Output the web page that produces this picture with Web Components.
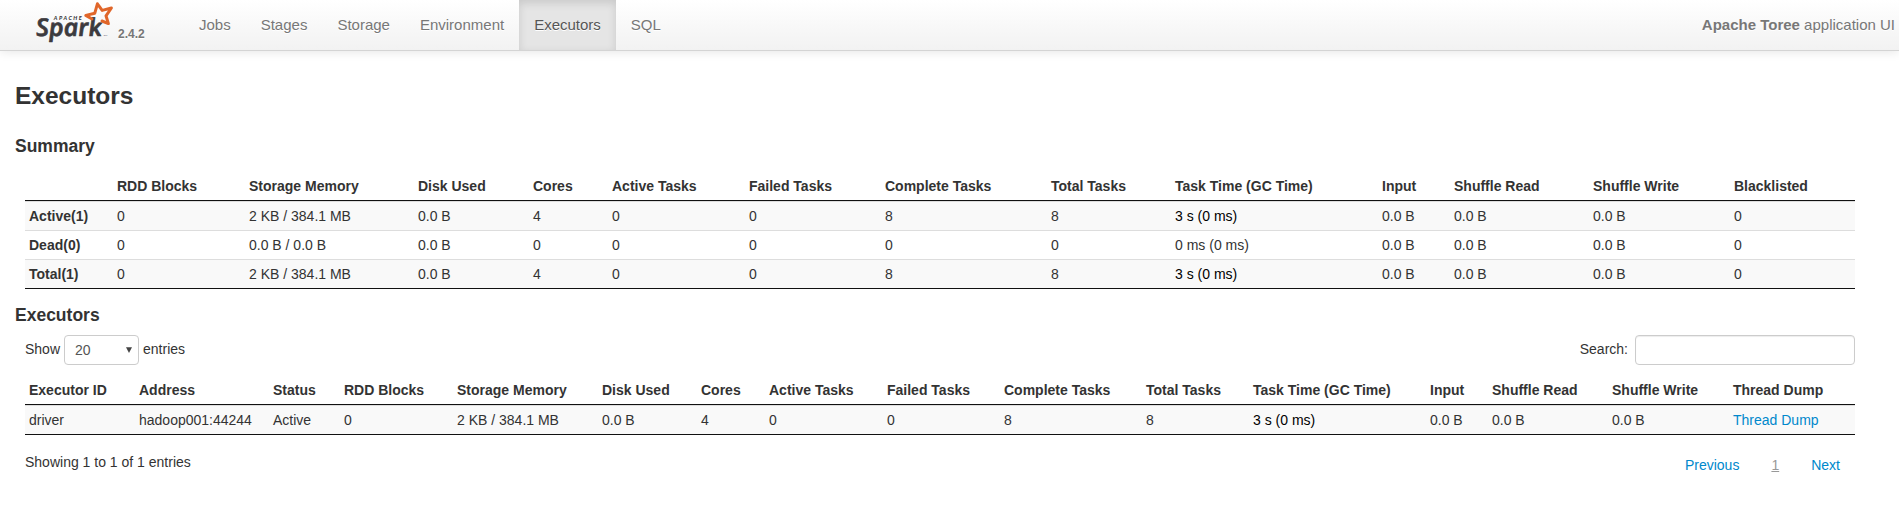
<!DOCTYPE html>
<html lang="en">
<head>
<meta charset="utf-8">
<title>Apache Toree - Executors</title>
<style>
html, body { margin: 0; background: #fff; }
body { font: 14px/20px "Liberation Sans", Arial, sans-serif; color: #333; }
</style>
</head>
<body>
<spark-app></spark-app>
<script>
const define = (name, html, setup) => customElements.define(name, class extends HTMLElement {
  constructor() {
    super();
    this.attachShadow({ mode: "open" }).innerHTML = html;
  }
  connectedCallback() { if (setup) setup(this, this.shadowRoot); }
});

define("spark-logo", `
<style>
:host { display: block; width: 80px; height: 45px; }
svg { display: block; overflow: visible; }
text { fill: #3c3a3e; font-style: italic; }
.word { font-family: "Open Sans", sans-serif; font-size: 24.5px; font-weight: 600; stroke: #3c3a3e; stroke-width: .7; stroke-linejoin: round; }
.over { font-family: Lato, sans-serif; font-size: 5.5px; font-weight: 900; }
.tm { font-family: Lato, sans-serif; font-size: 2.6px; }
</style>
<svg width="80" height="45" viewBox="34 0 80 45">
  <text class="word" transform="translate(35.4 35.6) skewX(5)" textLength="66" lengthAdjust="spacingAndGlyphs">Spark</text>
  <text class="over" x="52.8" y="19.6" textLength="28">APACHE</text>
  <text class="tm" x="102.5" y="36">TM</text>
  <path d="M91 19 L84.8 15.4 L93.8 13.2 L96.4 3.8 L101.2 10.4 L110.4 8 L105 15.8 L107.4 23.6 L101 21" fill="none" stroke="#e0662a" stroke-width="3" stroke-linejoin="round" stroke-linecap="round"/>
</svg>`);

define("nav-tab", `
<style>
:host { display: block; height: 50px; padding: 0 15px; font-size: 15px; line-height: 50px; color: #777; text-shadow: 0 1px 0 #fff; cursor: pointer; }
:host([active]) { color: #555; background: #e5e5e5; box-shadow: inset 0 3px 8px rgba(0,0,0,.125); }
</style><slot></slot>`);

define("app-navbar", `
<style>
:host { display: flex; height: 50px; background: linear-gradient(#fff, #f2f2f2); border-bottom: 1px solid #d4d4d4; box-shadow: 0 1px 10px rgba(0,0,0,.1); padding: 0 4px 0 35px; color: #777; }
.version { width: 66px; padding: 24px 0 0 3px; font-size: 12px; font-weight: bold; text-shadow: 0 1px 0 #fff; }
.tabs { display: flex; flex: 1; }
.app { font-size: 15px; line-height: 50px; text-shadow: 0 1px 0 #fff; }
</style>
<spark-logo></spark-logo><div class="version">2.4.2</div>
<div class="tabs"><slot></slot></div>
<div class="app"><slot name="app"></slot></div>`);

define("section-title", `
<style>
:host { display: block; font-size: 17.5px; line-height: 20px; font-weight: bold; padding-left: 15px; }
:host([page]) { font-size: 24.5px; line-height: 40px; }
</style><slot></slot>`);

const cell = v => v.startsWith("@") ? `<a>${v.slice(1)}</a>` : v.startsWith("3 s") ? `<span class="busy">${v}</span>` : v;

define("data-table", `
<style>
:host { display: block; margin: 0 44px 0 25px; }
table { table-layout: fixed; width: 1830px; border-collapse: separate; border-spacing: 0; border-bottom: 1px solid #111; }
th, td { height: 20px; padding: 4px 0 4px 4px; text-align: left; white-space: nowrap; }
thead th { border-bottom: 1px solid #111; }
tbody th, tbody td { border-top: 1px solid #ddd; }
tbody tr:nth-child(odd) { background: #f9f9f9; }
.busy { color: #000; }
a { color: #08c; cursor: pointer; }
</style><table></table>`, (host, root) => {
  const { columns, rows } = tables[host.getAttribute("source")];
  const rowHead = host.hasAttribute("row-head");
  root.querySelector("table").innerHTML =
    `<colgroup>${columns.map(c => `<col style="width:${c[1]}px">`).join("")}</colgroup>
     <thead><tr>${columns.map(c => `<th>${c[0]}</th>`).join("")}</tr></thead>
     <tbody>${rows.map(r => `<tr>${r.map((v, i) => rowHead && !i ? `<th>${v}</th>` : `<td>${cell(v)}</td>`).join("")}</tr>`).join("")}</tbody>`;
});

define("length-select", `
<style>
:host { display: flex; line-height: 28px; }
.box { display: flex; box-sizing: border-box; width: 75px; height: 30px; margin: 0 4px; padding: 0 6px 0 10px; border: 1px solid #ccc; border-radius: 4px; color: #555; align-items: center; justify-content: space-between; }
svg { display: block; margin-top: -1px; }
</style>
<span>Show</span>
<span class="box"><span><slot></slot></span><svg width="6" height="6" viewBox="0 0 6 6"><path d="M0 .3H6L3 6z" fill="#444"/></svg></span>
<span>entries</span>`);

define("search-field", `
<style>
:host { display: flex; line-height: 28px; }
input { box-sizing: border-box; width: 220px; height: 30px; margin: 0 0 0 7px; border: 1px solid #ccc; border-radius: 4px; box-shadow: inset 0 1px 1px rgba(0,0,0,.075); }
</style><span>Search:</span><input type="text" aria-label="Search">`);

define("page-links", `
<style>
:host { display: flex; color: #08c; }
span { margin-left: 32px; cursor: pointer; }
.current { color: #999; text-decoration: underline; text-decoration-skip-ink: none; }
</style><span>Previous</span><span class="current">1</span><span>Next</span>`);

const tables = {
  summary: {
    columns: [["",88],["RDD Blocks",132],["Storage Memory",169],["Disk Used",115],["Cores",79],["Active Tasks",137],["Failed Tasks",136],["Complete Tasks",166],["Total Tasks",124],["Task Time (GC Time)",207],["Input",72],["Shuffle Read",139],["Shuffle Write",141],["Blacklisted",125]],
    rows: [
      ["Active(1)","0","2 KB / 384.1 MB","0.0 B","4","0","0","8","8","3 s (0 ms)","0.0 B","0.0 B","0.0 B","0"],
      ["Dead(0)","0","0.0 B / 0.0 B","0.0 B","0","0","0","0","0","0 ms (0 ms)","0.0 B","0.0 B","0.0 B","0"],
      ["Total(1)","0","2 KB / 384.1 MB","0.0 B","4","0","0","8","8","3 s (0 ms)","0.0 B","0.0 B","0.0 B","0"]
    ]
  },
  executors: {
    columns: [["Executor ID",110],["Address",134],["Status",71],["RDD Blocks",113],["Storage Memory",145],["Disk Used",99],["Cores",68],["Active Tasks",118],["Failed Tasks",117],["Complete Tasks",142],["Total Tasks",107],["Task Time (GC Time)",177],["Input",62],["Shuffle Read",120],["Shuffle Write",121],["Thread Dump",126]],
    rows: [["driver","hadoop001:44244","Active","0","2 KB / 384.1 MB","0.0 B","4","0","0","8","8","3 s (0 ms)","0.0 B","0.0 B","0.0 B","@Thread Dump"]]
  }
};

define("spark-app", `
<style>
:host { display: block; width: 1899px; height: 511px; overflow: hidden; }
.page { margin-top: 25px; }
.summary { margin: 20px 0 16px; }
.bar { display: flex; justify-content: space-between; margin: 10px 44px 11px 25px; }
.foot { display: flex; justify-content: space-between; margin: 17px 59px 0 25px; }
page-links { margin-top: 3px; }
.st { margin-bottom: 16px; }
</style>
<app-navbar>
  <nav-tab>Jobs</nav-tab><nav-tab>Stages</nav-tab><nav-tab>Storage</nav-tab><nav-tab>Environment</nav-tab><nav-tab active>Executors</nav-tab><nav-tab>SQL</nav-tab>
  <span slot="app"><b>Apache Toree</b> application UI</span>
</app-navbar>
<section-title page class="page">Executors</section-title>
<section-title class="summary">Summary</section-title>
<data-table source="summary" row-head class="st"></data-table>
<section-title>Executors</section-title>
<div class="bar"><length-select>20</length-select><search-field></search-field></div>
<data-table source="executors"></data-table>
<div class="foot"><span>Showing 1 to 1 of 1 entries</span><page-links></page-links></div>`);
</script>
</body>
</html>
